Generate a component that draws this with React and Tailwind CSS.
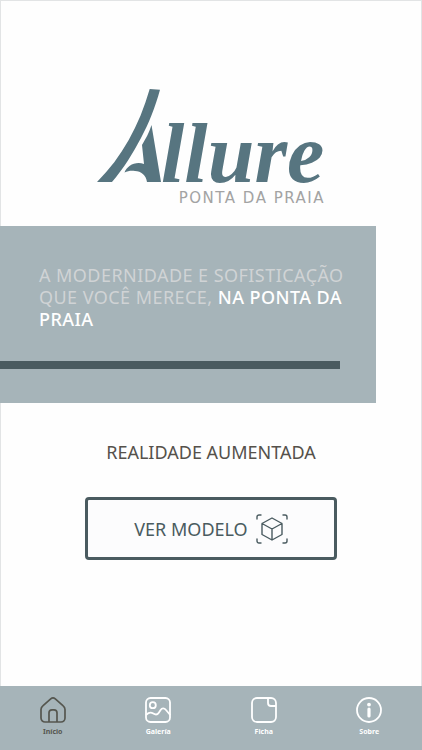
const NAV_ITEMS = [
  { label: "Início", icon: HomeIcon, active: true },
  { label: "Galería", icon: GalleryIcon },
  { label: "Ficha", icon: SheetIcon },
  { label: "Sobre", icon: AboutIcon },
];

function HomeIcon() {
  return (
    <svg viewBox="0 0 26 26" className="w-[26px] h-[26px]" fill="none" stroke="currentColor" strokeWidth="1.7" strokeLinejoin="round" aria-hidden="true">
      <path d="M1 12.500c0-1.500.6-2.700 1.800-3.700l7.900-6.900c1.400-1.200 3.200-1.200 4.600 0l7.900 6.900c1.200 1 1.800 2.200 1.800 3.700V21a4 4 0 0 1-4 4H5a4 4 0 0 1-4-4z" />
      <path d="M9 25v-9.200a3 3 0 0 1 3-3h2a3 3 0 0 1 3 3V25" />
    </svg>
  );
}

function GalleryIcon() {
  return (
    <svg viewBox="0 0 26 26" className="w-[26px] h-[26px]" fill="none" stroke="currentColor" strokeWidth="1.8" strokeLinecap="round" aria-hidden="true">
      <rect x="1" y="1" width="24" height="24" rx="4.5" />
      <circle cx="7.8" cy="8.2" r="3" />
      <path d="M1.500 17.500c2-2 4.500-2.500 6.800-1 2 1.300 4.200 1.100 5.500-.8l1.800-2.700c1.400-2.100 3.700-2.100 5.200-.2l4 4.700" />
    </svg>
  );
}

function SheetIcon() {
  return (
    <svg viewBox="0 0 26 26" className="w-[26px] h-[26px]" fill="none" stroke="currentColor" strokeWidth="1.8" aria-hidden="true">
      <rect x="1" y="1" width="24" height="24" rx="5" />
      <path d="M17 1v5a3 3 0 0 0 3 3h5" />
    </svg>
  );
}

function AboutIcon() {
  return (
    <svg viewBox="0 0 26 26" className="w-[26px] h-[26px]" fill="none" stroke="currentColor" strokeWidth="1.8" aria-hidden="true">
      <circle cx="13" cy="13" r="12" />
      <circle cx="13" cy="7.600" r="1.900" fill="currentColor" stroke="none" />
      <path d="M13 12v7" strokeWidth="3.200" strokeLinecap="round" />
    </svg>
  );
}

function ModelIcon() {
  return (
    <svg viewBox="0 0 32 30" className="w-8 h-[30px]" fill="none" stroke="currentColor" strokeWidth="1.4" strokeLinecap="round" strokeLinejoin="round" aria-hidden="true">
      <path d="M1 5V3a2 2 0 0 1 2-2h2M27 1h2a2 2 0 0 1 2 2v2M31 25v2a2 2 0 0 1-2 2h-2M5 29H3a2 2 0 0 1-2-2v-2" />
      <path d="M16 4l10 5.500v11L16 26 6 20.500v-11zM6 9.500L16 15l10-5.500M16 15v11" />
    </svg>
  );
}

function Logo() {
  return (
    <div className="w-[228px] text-[#577580]">
      <div className="flex items-baseline">
        <svg viewBox="0 0 64 93" className="w-16 h-[93px] shrink-0" fill="currentColor" aria-hidden="true">
          <path d="M52.700 0L63 .8C58 19 52 34 44 49 36 64 27 79 15 93H0C25 68 42 37 52.700 0z" />
          <path d="M54.500 36L64 93H50C49 86 44 82 38 82c-3-.6-7-.4-10.500 1.500C30 77 38 72 47 75L45 56c4-7 7-12 9.500-20z" />
        </svg>
        <span className="font-['Liberation_Serif',serif] text-[84px] leading-[70px] font-bold italic">
          llure
        </span>
      </div>
      <p className="pt-px text-right font-['DejaVu_Sans',sans-serif] text-[15px] leading-4 tracking-widest whitespace-nowrap text-[#a3a3a3]">
        PONTA DA PRAIA
      </p>
    </div>
  );
}

const App = () => {
  return (
    <div className="min-h-screen flex flex-col bg-[#fefefe] font-['Noto_Sans',sans-serif]">
      <main className="flex-1 flex flex-col border-x border-t border-[#e2e4e5]">
        <header className="flex justify-center pt-[88px]">
          <Logo />
        </header>

        <section className="-ml-px mt-5 w-[89.5%] bg-[#a6b4b9] pt-[38px] pb-[34px]">
          <p className="pl-[39px] text-lg leading-[22px] tracking-wide text-[#d0d3d5]">
            A MODERNIDADE E SOFISTICAÇÃO QUE VOCÊ MERECE,{" "}
            <strong className="font-medium text-white">NA PONTA DA PRAIA</strong>
          </p>
          <div className="mt-[31px] mr-9 h-2 bg-[#4a5b60]" />
        </section>

        <section className="flex flex-col items-center pt-[37px] pb-8">
          <h2 className="text-lg leading-6 text-[#55514b]">REALIDADE AUMENTADA</h2>
          <button
            type="button"
            className="mt-[33px] w-3/5 h-[63px] flex items-center justify-center gap-2 whitespace-nowrap rounded-[4px] border-3 border-[#4a5b60] bg-[#fcfcfd] text-lg text-[#4a5b60]"
          >
            VER MODELO
            <ModelIcon />
          </button>
        </section>
      </main>

      <nav className="grid grid-cols-4 h-16 bg-[#a6b4b9]">
        {NAV_ITEMS.map(({ label, icon: Icon, active }) => (
          <a
            key={label}
            href="#"
            aria-current={active ? "page" : undefined}
            className={
              active
                ? "flex flex-col items-center pt-[11px] text-[#55564f]"
                : "flex flex-col items-center pt-[11px] text-white"
            }
          >
            <Icon />
            <span className="mt-1 text-[7px] leading-[9px] font-bold">{label}</span>
          </a>
        ))}
      </nav>
    </div>
  );
};

export default App;
